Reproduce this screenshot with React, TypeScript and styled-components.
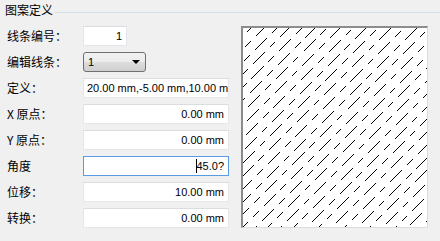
import React from 'react';
import styled, { createGlobalStyle } from 'styled-components';

const Global = createGlobalStyle`
  html, body { margin: 0; padding: 0; background: #f0f0f0; }
  body { width: 440px; height: 241px; overflow: hidden; font-family: "Noto Sans CJK SC", "Noto Sans", sans-serif; color: #000; }
`;

const Page = styled.div`
  width: 440px;
  height: 241px;
  background: #f0f0f0;
  display: flex;
  flex-direction: column;
`;

const GroupHeader = styled.div`
  display: flex;
  align-items: flex-start;
  height: 25px;
  padding-left: 5px;
`;

const GroupTitle = styled.span`
  font-size: 12px;
  line-height: 14px;
  padding-top: 3px;
  margin-right: 2px;
`;

const GroupRule = styled.div`
  flex: 1;
  height: 1px;
  margin-top: 12px;
  background: #d5dfe5;
`;

const Body = styled.div`
  display: flex;
  align-items: flex-start;
  padding-left: 7px;
  margin-top: 1px;
`;

const Form = styled.div`
  display: grid;
  grid-template-columns: 76px 146px;
  grid-auto-rows: 20px;
  row-gap: 6px;
  align-items: center;
`;

const Label = styled.div`
  font-size: 12px;
  line-height: 20px;
  white-space: nowrap;
`;

const Field = styled.div<{ $w: number; $focus?: boolean; $left?: boolean }>`
  box-sizing: border-box;
  width: ${p => p.$w}px;
  height: 20px;
  background: #fff;
  border: 1px solid ${p => (p.$focus ? '#569de5' : '#e3e6ea')};
  border-top-color: ${p => (p.$focus ? '#569de5' : '#d9dce1')};
  display: flex;
  align-items: center;
  justify-content: ${p => (p.$left ? 'flex-start' : 'flex-end')};
  padding: 0 ${p => (p.$left ? '0' : '4px')} 0 ${p => (p.$left ? '3px' : '4px')};
  font-family: "Liberation Sans", Arial, sans-serif;
  font-size: 11px;
  white-space: nowrap;
  overflow: hidden;
`;

const Caret = styled.span`
  display: inline-block;
  width: 1px;
  height: 14px;
  background: #000;
  margin-right: -1px;
`;

const Combo = styled.div`
  box-sizing: border-box;
  width: 63px;
  height: 20px;
  border: 1px solid #707070;
  border-radius: 3px;
  background: linear-gradient(to bottom, #f2f2f2 0%, #ebebeb 50%, #dddddd 50%, #cfcfcf 100%);
  display: flex;
  align-items: center;
  justify-content: space-between;
  padding: 0 5px 0 4px;
  font-family: "Liberation Sans", Arial, sans-serif;
  font-size: 11px;
`;

const ComboArrow = styled.span`
  width: 0;
  height: 0;
  border-left: 4px solid transparent;
  border-right: 4px solid transparent;
  border-top: 4px solid #000;
`;

const PatternBox = styled.div`
  box-sizing: border-box;
  width: 187px;
  height: 202px;
  margin-left: 12px;
  background: #fff;
  border-top: 2px solid #8c8c8c;
  border-left: 2px solid #8c8c8c;
  border-right: 1px solid #dcdcdc;
  border-bottom: 1px solid #dcdcdc;
  overflow: hidden;
  & > svg { display: block; }
`;

const W = 184;
const H = 199;
const D = 9;
const SHIFT = 11;

const Hatch: React.FC = () => {
  const lines = [];
  for (let k = -50; k <= 50; k++) {
    lines.push(
      <line
        key={k}
        x1={-400}
        y1={k * D}
        x2={400}
        y2={k * D}
        strokeDashoffset={k * SHIFT}
      />
    );
  }
  return (
    <svg width={W} height={H} viewBox={`0 0 ${W} ${H}`}>
      <g
        transform={`translate(0 ${H}) rotate(-45)`}
        stroke="#000"
        strokeWidth={1}
        strokeDasharray="17 7 8 7"
        shapeRendering="crispEdges"
        fill="none"
      >
        {lines}
      </g>
    </svg>
  );
};

export default function App() {
  return (
    <Page>
      <Global />
      <GroupHeader>
        <GroupTitle>图案定义</GroupTitle>
        <GroupRule />
      </GroupHeader>
      <Body>
        <Form>
          <Label>线条编号：</Label>
          <Field $w={44}>1</Field>
          <Label>编辑线条：</Label>
          <Combo>
            <span>1</span>
            <ComboArrow />
          </Combo>
          <Label>定义：</Label>
          <Field $w={146} $left>20.00 mm,-5.00 mm,10.00 m</Field>
          <Label>X 原点：</Label>
          <Field $w={146}>0.00 mm</Field>
          <Label>Y 原点：</Label>
          <Field $w={146}>0.00 mm</Field>
          <Label>角度</Label>
          <Field $w={146} $focus>
            <Caret />
            45.0?
          </Field>
          <Label>位移：</Label>
          <Field $w={146}>10.00 mm</Field>
          <Label>转换：</Label>
          <Field $w={146}>0.00 mm</Field>
        </Form>
        <PatternBox>
          <Hatch />
        </PatternBox>
      </Body>
    </Page>
  );
}
